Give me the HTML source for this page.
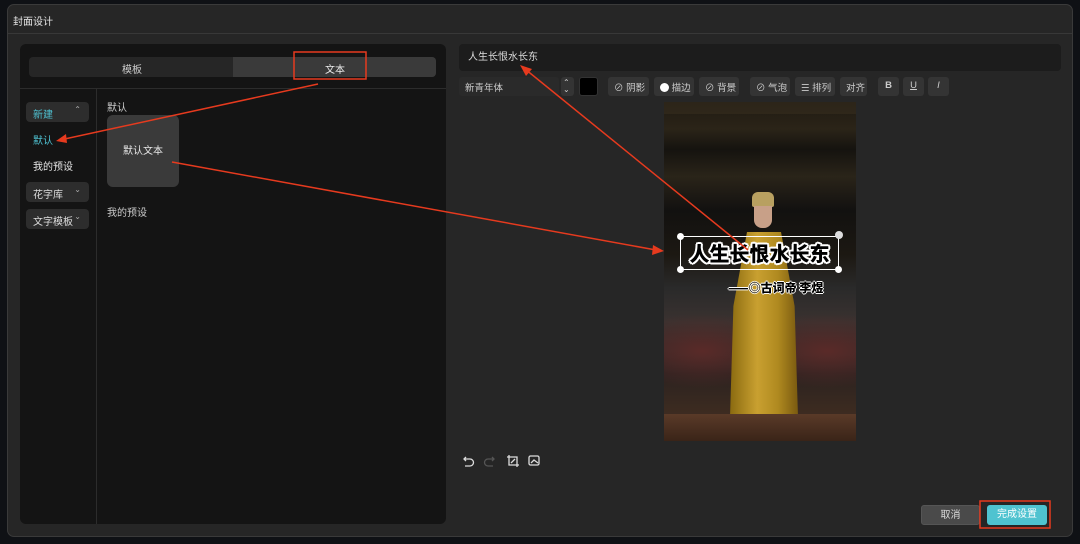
<!DOCTYPE html>
<html><head><meta charset="utf-8"><style>
*{margin:0;padding:0;box-sizing:border-box}
body{width:1080px;height:544px;background:#0f1115;font-family:"Liberation Sans","Noto Sans CJK SC",sans-serif;color:#ddd;position:relative;overflow:hidden;font-size:10px}
.dlg{position:absolute;left:7px;top:4px;width:1066px;height:533px;background:#262626;border:1px solid #3a3a3a;border-radius:7px}
.title{position:absolute;left:5px;top:8px;font-size:10px;color:#e6e6e6}
.hl{position:absolute;left:0;right:0;top:28px;height:1px;background:#383838}
.lp{position:absolute;left:12px;top:39px;width:426px;height:480px;background:#141414;border-radius:6px;overflow:hidden}
.tabs{position:absolute;left:9px;top:13px;width:407px;height:20px;background:#262626;border-radius:4px}
.tab2{position:absolute;left:204px;top:0;width:203px;height:20px;background:#3a3a3a;border-radius:0 4px 4px 0}
.t{position:absolute;top:4px;font-size:10px;color:#ccc}
.div1{position:absolute;left:0;right:0;top:44px;height:1px;background:#2c2c2c}
.div2{position:absolute;left:76px;top:45px;bottom:0;width:1px;background:#2c2c2c}
.pill{position:absolute;left:6px;width:63px;height:20px;background:#2d2d2d;border-radius:4px;font-size:10px;padding:4px 7px;color:#ddd}
.pill span{position:absolute;right:8px;top:3px;font-size:8px;color:#aaa}
.card{position:absolute;left:87px;top:71px;width:72px;height:72px;background:#3a3a3a;border-radius:6px;font-size:10px;color:#e8e8e8;text-align:center;line-height:74px}
.ta{position:absolute;left:459px;top:44px;width:602px;height:27px;background:#1c1c1c;border-radius:4px;padding:4px 9px;font-size:10px;color:#ddd}
.tb{position:absolute;top:77px;height:19px;background:#343434;border-radius:3px;font-size:9.5px;color:#ccc;padding:3px 6px;white-space:nowrap}
.img{position:absolute;left:664px;top:102px;width:192px;height:339px;overflow:hidden;
background:linear-gradient(180deg,#1f1a12 0%,#2b2418 8%,#15130f 14%,#2a2419 22%,#121110 32%,#1c1812 45%,#2a2a2a 55%,#3a3230 65%,#2b2220 80%,#3a2a20 90%,#4a3025 100%)}
.btn{position:absolute;top:505px;height:20px;border-radius:3px;font-size:10px;text-align:center;line-height:20px}
</style></head><body>
<div class="dlg">
<div class="title">封面设计</div>
<div class="hl"></div>
<div class="lp">
 <div class="tabs"><div class="tab2"></div><div class="t" style="left:93px">模板</div><div class="t" style="left:296px;color:#eee">文本</div></div>
 <div class="div1"></div><div class="div2"></div>
 <div class="pill" style="top:58px;color:#4fc3d3">新建<span>⌃</span></div>
 <div style="position:absolute;left:13px;top:88px;color:#4fc3d3">默认</div>
 <div style="position:absolute;left:13px;top:114px;color:#e6e6e6">我的预设</div>
 <div class="pill" style="top:138px">花字库<span>⌄</span></div>
 <div class="pill" style="top:165px">文字模板<span>⌄</span></div>
 <div style="position:absolute;left:87px;top:55px;color:#ccc">默认</div>
 <div class="card">默认文本</div>
 <div style="position:absolute;left:87px;top:160px;color:#ccc">我的预设</div>
</div>
</div>
<div class="ta">人生长恨水长东</div>
<div class="tb" style="left:459px;width:100px;background:#2a2a2a">新青年体</div>
<div class="tb" style="left:561px;width:13px;padding:2px 2px;font-size:8px;line-height:7px">⌃<br>⌄</div>
<div class="tb" style="left:579px;width:19px;background:#000;border:1px solid #333"></div>
<div class="tb" style="left:608px;width:41px">⊘ 阴影</div>
<div class="tb" style="left:654px;width:40px"><span style="display:inline-block;width:9px;height:9px;background:#fff;border-radius:50%;vertical-align:-1px"></span> 描边</div>
<div class="tb" style="left:699px;width:40px">⊘ 背景</div>
<div class="tb" style="left:750px;width:40px">⊘ 气泡</div>
<div class="tb" style="left:795px;width:40px">☰ 排列</div>
<div class="tb" style="left:840px;width:27px">对齐</div>
<div class="tb" style="left:878px;width:21px;font-weight:bold;text-align:center;padding:3px 0">B</div>
<div class="tb" style="left:903px;width:21px;text-decoration:underline;text-align:center;padding:3px 0">U</div>
<div class="tb" style="left:928px;width:21px;font-style:italic;text-align:center;padding:3px 0">I</div>
<div class="img">
 <div style="position:absolute;left:0;top:0;width:192px;height:12px;background:#3a3020;opacity:.5"></div>
 <div style="position:absolute;left:0;top:205px;width:192px;height:110px;background:radial-gradient(ellipse at 20% 40%,#5a2a28 0,transparent 40%),radial-gradient(ellipse at 85% 40%,#5a2a28 0,transparent 40%)"></div>
 <div style="position:absolute;left:88px;top:90px;width:22px;height:15px;background:#b8a060;border-radius:6px 6px 2px 2px"></div>
 <div style="position:absolute;left:90px;top:104px;width:18px;height:22px;background:#c8a088;border-radius:0 0 8px 8px"></div>
 <div style="position:absolute;left:66px;top:130px;width:68px;height:185px;background:linear-gradient(90deg,#8a6a10,#c9a030 40%,#b08a20 70%,#7a5a10);clip-path:polygon(25% 0,75% 0,95% 40%,100% 100%,0 100%,5% 40%)"></div>
 <div style="position:absolute;left:0;top:312px;width:192px;height:27px;background:linear-gradient(#5a3a28,#3a2418)"></div>
 <div style="position:absolute;left:16px;top:134px;width:159px;height:34px;border:1.5px solid #fff;font-family:'Noto Sans CJK SC',sans-serif;font-weight:900;font-size:20px;color:#000;text-align:center;line-height:31px;white-space:nowrap;letter-spacing:0;text-shadow:-2px 0 #fff,2px 0 #fff,0 -2px #fff,0 2px #fff,1.5px 1.5px #fff,-1.5px -1.5px #fff,1.5px -1.5px #fff,-1.5px 1.5px #fff">人生长恨水长东</div>
 <div style="position:absolute;left:13px;top:131px;width:7px;height:7px;background:#fff;border-radius:50%"></div>
 <div style="position:absolute;left:13px;top:164px;width:7px;height:7px;background:#fff;border-radius:50%"></div>
 <div style="position:absolute;left:171px;top:164px;width:7px;height:7px;background:#fff;border-radius:50%"></div>
 <div style="position:absolute;left:171px;top:129px;width:8px;height:8px;background:#ddd;border-radius:50%"></div>
 <div style="position:absolute;left:64px;top:177px;font-family:'Noto Sans CJK SC',sans-serif;font-weight:900;font-size:12px;color:#000;white-space:nowrap;text-shadow:-1px 0 #fff,1px 0 #fff,0 -1px #fff,0 1px #fff">——◎古词帝 李煜</div>
</div>
<svg style="position:absolute;left:462px;top:453px" width="90" height="16" fill="none" stroke="#ddd" stroke-width="1.3">
<path d="M4 4 L2 6 L4 8 M2 6 H8 a3.5 3.5 0 0 1 0 7 H3"/>
<path stroke="#555" d="M30 4 L32 6 L30 8 M32 6 H26 a3.5 3.5 0 0 0 0 7 H31"/>
<path d="M47 2 V12 H57 M45 4 H55 V14 M49 10 L53 6"/>
<rect x="67" y="3" width="10" height="9" rx="1.5"/><path d="M69 10 L72 7 L76 10"/>
</svg>
<div class="btn" style="left:921px;width:59px;background:#4a4a4a;color:#ddd;border:1px solid #555">取消</div>
<div class="btn" style="left:987px;width:60px;background:#4fc3d0;color:#fff">完成设置</div>
<svg style="position:absolute;left:0;top:0" width="1080" height="544" fill="none" stroke="#e63a1e" stroke-width="1.5">
<rect x="294" y="52" width="72" height="27"/>
<rect x="980" y="501" width="70" height="27"/>
<path d="M318 84 L60 140"/><path fill="#e63a1e" stroke="none" d="M56 141 L66 134 L67 143Z"/>
<path d="M172 162 L656 250"/><path fill="#e63a1e" stroke="none" d="M664 251 L653 245 L652 255Z"/>
<path d="M748 250 L525 69"/><path fill="#e63a1e" stroke="none" d="M520 65 L526 76 L532 69Z"/>
</svg>
</body></html>
